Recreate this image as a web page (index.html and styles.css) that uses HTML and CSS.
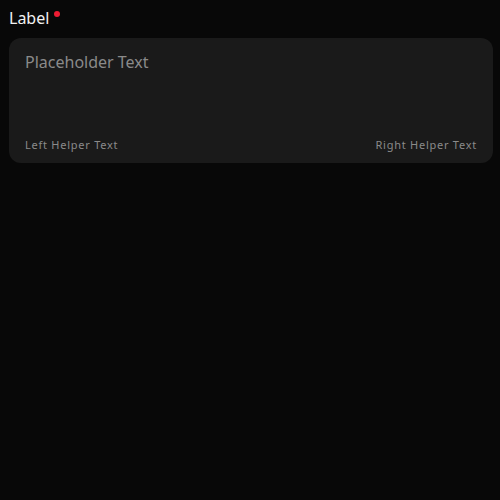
FILE: index.html
```html
<!DOCTYPE html>
<html>
<head>
<meta charset="utf-8">
<link rel="stylesheet" href="styles.css">
</head>
<body>
<div class="field">
  <div class="label-row">
    <span class="label">Label</span><span class="required"></span>
  </div>
  <div class="box">
    <div class="placeholder">Placeholder Text</div>
    <div class="helpers">
      <span class="helper">Left Helper Text</span>
      <span class="helper">Right Helper Text</span>
    </div>
  </div>
</div>
</body>
</html>
```
FILE: styles.css
```css
html, body {
  margin: 0;
  padding: 0;
  background: #080808;
  height: 100%;
}
body {
  font-family: "Noto Sans", sans-serif;
  padding: 0 7px 0 9px;
}
.field {
  display: flex;
  flex-direction: column;
}
.label-row {
  display: flex;
  align-items: flex-start;
  padding-top: 8px;
  height: 22px;
  box-sizing: content-box;
}
.label {
  color: #f2f2f2;
  font-size: 16px;
  line-height: 20px;
}
.required {
  width: 6px;
  height: 6px;
  border-radius: 50%;
  background: #ee1c33;
  margin-left: 5px;
  margin-top: 3px;
}
.box {
  margin-top: 8px;
  background: #1a1a1a;
  border-radius: 12px;
  height: 125px;
  box-sizing: border-box;
  padding: 13px 16px 10px 16px;
  display: flex;
  flex-direction: column;
  justify-content: space-between;
}
.placeholder {
  color: #8a8a8a;
  font-size: 16px;
  line-height: 22px;
}
.helpers {
  display: flex;
  justify-content: space-between;
}
.helper {
  color: #8a8a8a;
  font-size: 11px;
  letter-spacing: 0.75px;
  line-height: 16px;
}
```
